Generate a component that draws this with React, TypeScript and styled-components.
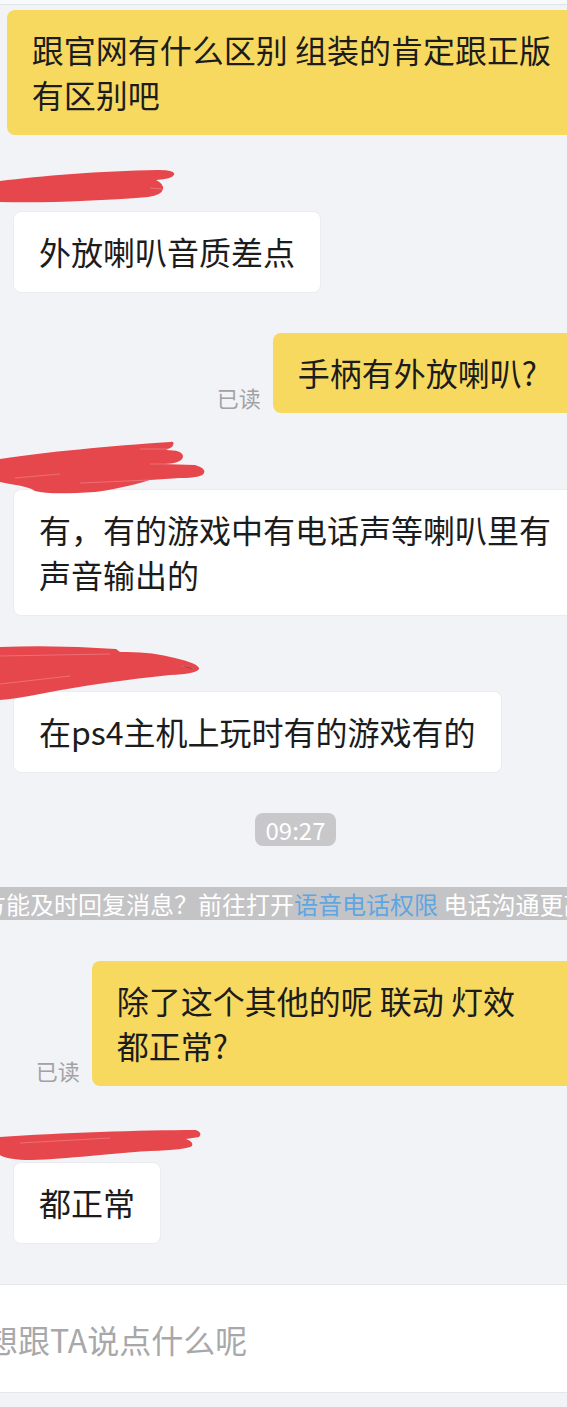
import React from "react";
import styled, { createGlobalStyle } from "styled-components";

const Global = createGlobalStyle`
  html, body { margin: 0; padding: 0; background: #f2f3f7; }
  body { font-family: "Noto Sans CJK SC", "Noto Sans", sans-serif; }
`;

const Root = styled.div`
  width: 567px;
  height: 1407px;
  overflow: hidden;
  background: #f2f3f7;
  display: flex;
  flex-direction: column;
  font-family: "Noto Sans CJK SC", "Noto Sans", sans-serif;
`;

const TopEdge = styled.div`
  height: 4px;
  flex: none;
  background: #f8f9fb;
  border-bottom: 1px solid #dfe3ea;
`;

const Stage = styled.div`
  width: 591px;
  flex: none;
  display: flex;
  flex-direction: column;
  padding-top: 5px;
`;

const OutRow = styled.div<{ $first?: boolean }>`
  display: flex;
  justify-content: flex-end;
  align-items: flex-end;
  gap: 12px;
  padding-right: 14px;
  margin-top: ${(p) => (p.$first ? "0" : "41px")};
`;

const InBlock = styled.div`
  display: flex;
  flex-direction: column;
  align-items: flex-start;
  padding-left: 14px;
  margin-top: 41px;
`;

const NameRow = styled.div`
  position: relative;
  height: 36px;
  align-self: stretch;
  margin-left: -14px;
`;

const Redaction = styled.svg<{ $top: number }>`
  position: absolute;
  left: 0;
  top: ${(p) => p.$top}px;
  display: block;
`;

const Bubble = styled.div<{ $out?: boolean; $tail?: number }>`
  box-sizing: border-box;
  max-width: 600px;
  padding: 17px ${(p) => (p.$tail ?? 25)}px 18px 25px;
  border-radius: 8px;
  font-size: 32px;
  line-height: 45px;
  white-space: pre-line;
  color: #1c1c1c;
  background: ${(p) => (p.$out ? "#f8d960" : "#ffffff")};
  border: ${(p) => (p.$out ? "none" : "1px solid #ececef")};
  margin: ${(p) => (p.$out ? "0" : "-1px")};
`;

const ReadMark = styled.span`
  font-size: 22px;
  line-height: 26px;
  color: #a2a2a6;
  margin-bottom: 3px;
  white-space: nowrap;
`;

const TimeRow = styled.div`
  display: flex;
  justify-content: center;
  margin-top: 41px;
`;

const TimeBadge = styled.span`
  height: 33px;
  padding: 0 11px;
  border-radius: 8px;
  background: #c8c8ca;
  color: #ffffff;
  font-size: 24px;
  line-height: 33px;
`;

const Notice = styled.div`
  margin-top: 41px;
  height: 33px;
  width: 567px;
  overflow: hidden;
  background: #c4c4c6;
  display: flex;
  align-items: center;
`;

const NoticeText = styled.span`
  flex: none;
  margin-left: -90px;
  white-space: nowrap;
  font-size: 24px;
  line-height: 33px;
  color: #ffffff;
`;

const NoticeLink = styled.span`
  color: #5ea6e2;
`;

const InputBar = styled.div`
  margin-top: 41px;
  width: 567px;
  height: 107px;
  flex: none;
  background: #ffffff;
  border-top: 1px solid #e6e7eb;
  border-bottom: 1px solid #e6e7eb;
  display: flex;
  align-items: center;
  overflow: hidden;
`;

const Placeholder = styled.span`
  flex: none;
  margin-left: -14px;
  font-size: 32px;
  color: #a8a8aa;
  white-space: nowrap;
`;

const RED = "#e6474d";
const STREAK = "rgba(255,255,255,0.22)";

function Scribble({ variant, top }: { variant: number; top: number }) {
  if (variant === 1) {
    return (
      <Redaction $top={top} width="178" height="36" viewBox="0 0 178 36">
        <path
          d="M0 13 C40 8 100 3 158 2 Q176 2 174 7 Q172 11 156 12 Q164 16 163 21 Q162 27 148 29 C100 33 45 35 0 34 Z"
          fill={RED}
        />
        <path d="M150 20 L162 21" stroke={STREAK} strokeWidth="1" />
      </Redaction>
    );
  }
  if (variant === 2) {
    return (
      <Redaction $top={top} width="208" height="55" viewBox="0 0 208 55">
        <path
          d="M0 19 C45 12 110 6 170 2 Q176 1 172 7 L166 10 Q182 10 183 16 Q183 23 165 24 L195 25 Q206 28 204 33 Q202 38 180 38 L150 40 C130 46 110 50 95 52 Q50 55 35 51 Q30 47 10 44 L0 42 Z"
          fill={RED}
        />
        <path d="M140 9 L180 9 M150 24 L196 24 M80 43 L150 40 M15 38 L60 34" stroke={STREAK} strokeWidth="1" />
      </Redaction>
    );
  }
  if (variant === 3) {
    return (
      <Redaction $top={top} width="202" height="56" viewBox="0 0 202 56">
        <path
          d="M0 1 Q60 -1 116 3 L120 6 Q150 5 175 12 Q200 18 199 23 Q196 28 170 29 C130 33 80 40 40 48 Q15 53 0 54 Z"
          fill={RED}
        />
        <path d="M0 10 L110 8 M182 20 Q190 21 194 23 M0 38 L70 30" stroke={STREAK} strokeWidth="1.2" />
      </Redaction>
    );
  }
  return (
    <Redaction $top={top} width="204" height="33" viewBox="0 0 204 33">
      <path
        d="M0 8 C60 4 140 1 196 1 Q203 4 199 8 L186 10 Q194 13 192 17 Q186 21 150 22 C100 25 60 31 25 31 Q5 30 0 26 Z"
        fill={RED}
      />
      <path d="M20 14 L110 9" stroke={STREAK} strokeWidth="1" />
    </Redaction>
  );
}

export default function App() {
  return (
    <>
      <Global />
      <Root>
        <TopEdge />
        <Stage>
          <OutRow $first>
            <Bubble $out $tail={26}>{"跟官网有什么区别 组装的肯定跟正版\n有区别吧"}</Bubble>
          </OutRow>

          <InBlock>
            <NameRow>
              <Scribble variant={1} top={-8} />
            </NameRow>
            <Bubble>外放喇叭音质差点</Bubble>
          </InBlock>

          <OutRow>
            <ReadMark>已读</ReadMark>
            <Bubble $out $tail={40}>手柄有外放喇叭?</Bubble>
          </OutRow>

          <InBlock>
            <NameRow>
              <Scribble variant={2} top={-14} />
            </NameRow>
            <Bubble>{"有，有的游戏中有电话声等喇叭里有\n声音输出的"}</Bubble>
          </InBlock>

          <InBlock>
            <NameRow>
              <Scribble variant={3} top={-10} />
            </NameRow>
            <Bubble>在ps4主机上玩时有的游戏有的</Bubble>
          </InBlock>

          <TimeRow>
            <TimeBadge>09:27</TimeBadge>
          </TimeRow>

          <Notice>
            <NoticeText>
              希望对方能及时回复消息？前往打开<NoticeLink>语音电话权限</NoticeLink> 电话沟通更高效
            </NoticeText>
          </Notice>

          <OutRow>
            <ReadMark>已读</ReadMark>
            <Bubble $out $tail={62}>{"除了这个其他的呢 联动 灯效\n都正常?"}</Bubble>
          </OutRow>

          <InBlock>
            <NameRow>
              <Scribble variant={4} top={2} />
            </NameRow>
            <Bubble>都正常</Bubble>
          </InBlock>
        </Stage>

        <InputBar>
          <Placeholder>想跟TA说点什么呢</Placeholder>
        </InputBar>
      </Root>
    </>
  );
}
